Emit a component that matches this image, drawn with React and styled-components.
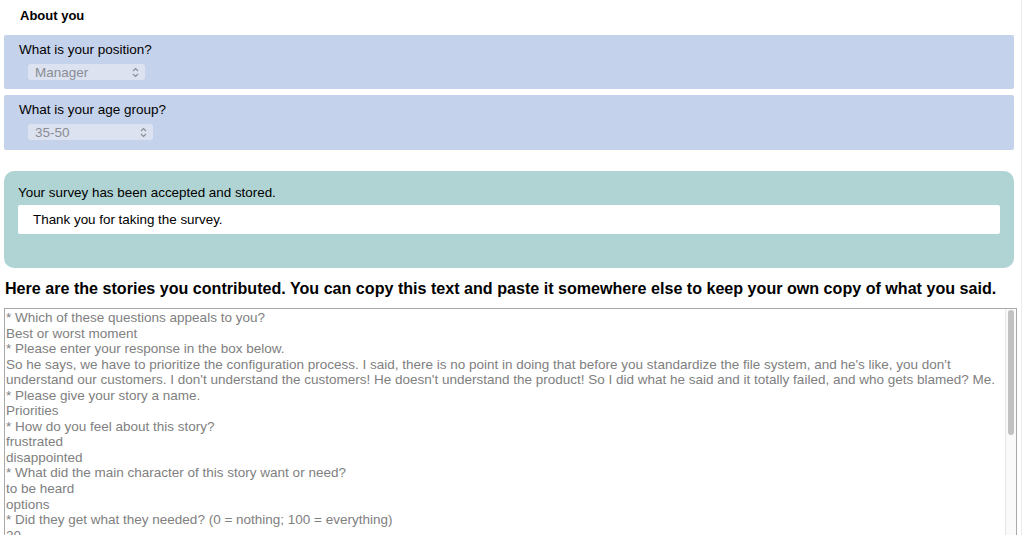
import styled, { createGlobalStyle } from "styled-components";

const GlobalStyle = createGlobalStyle`
  html, body {
    margin: 0;
    padding: 0;
    background: #fff;
    font-family: "Liberation Sans", Arial, sans-serif;
    overflow: hidden;
  }
`;

const Page = styled.div`
  width: 1021px;
  height: 535px;
  border-right: 1px solid #ececec;
  overflow: hidden;
`;

const SectionTitle = styled.div`
  font-size: 13px;
  font-weight: bold;
  color: #000;
  padding: 8px 0 0 20px;
  height: 35px;
  box-sizing: border-box;
  line-height: 15px;
`;

const QuestionBox = styled.div`
  margin: 0 0 6px 4px;
  width: 1010px;
  height: ${(p) => p.h}px;
  box-sizing: border-box;
  background: #c5d2eb;
  border-radius: 2px;
  padding: 7px 15px 0;
`;

const QuestionLabel = styled.div`
  font-size: 13.5px;
  line-height: 15px;
  color: #000;
`;

const FakeSelect = styled.div`
  margin: 7px 0 0 9px;
  width: ${(p) => p.w}px;
  height: 16px;
  box-sizing: border-box;
  background: #dce2f0;
  border-radius: 3px;
  display: flex;
  align-items: center;
  justify-content: space-between;
  padding: 0 6px 0 7px;
  font-size: 13.5px;
  color: #8a8d94;
`;

const Arrows = () => (
  <svg width="7" height="11" viewBox="0 0 7 11" fill="none" stroke="#8a8d94" strokeWidth="1.1">
    <path d="M1 4 L3.5 1.5 L6 4" />
    <path d="M1 7 L3.5 9.5 L6 7" />
  </svg>
);

const Notice = styled.div`
  margin: 21px 0 0 4px;
  width: 1010px;
  height: 97px;
  box-sizing: border-box;
  background: #b0d4d4;
  border-radius: 10px;
  padding: 14px 14px 0;
`;

const NoticeText = styled.div`
  font-size: 13.4px;
  line-height: 15px;
  color: #000;
`;

const ThanksBox = styled.div`
  margin-top: 5px;
  height: 29px;
  background: #fff;
  border-radius: 2px;
  padding-left: 15px;
  display: flex;
  align-items: center;
  font-size: 13.4px;
  color: #000;
`;

const Heading = styled.div`
  font-size: 16.1px;
  font-weight: bold;
  color: #000;
  padding: 11px 0 0 5px;
  height: 40px;
  box-sizing: border-box;
  line-height: 18px;
`;

const StoryWrap = styled.div`
  position: relative;
  margin-left: 4px;
  width: 1013px;
  height: 260px;
`;

const StoryArea = styled.textarea`
  display: block;
  width: 100%;
  height: 100%;
  box-sizing: border-box;
  border: 1px solid #a9a9a9;
  padding: 1px 11px 1px 1px;
  resize: none;
  font-family: "Liberation Sans", Arial, sans-serif;
  font-size: 13.5px;
  line-height: 15.55px;
  color: #808080;
  background: #fff;
  overflow: hidden;
  outline: none;
`;

const ScrollTrack = styled.div`
  position: absolute;
  top: 1px;
  right: 1px;
  bottom: 1px;
  width: 11px;
  box-sizing: border-box;
  background: #fafafa;
  border-left: 1px solid #e6e6e6;
  padding: 1px 2px 0 2px;
`;

const ScrollThumb = styled.div`
  height: 125px;
  background: #c2c2c2;
  border-radius: 4px;
`;

const storyText = [
  "* Which of these questions appeals to you?",
  "Best or worst moment",
  "* Please enter your response in the box below.",
  "So he says, we have to prioritize the configuration process. I said, there is no point in doing that before you standardize the file system, and he's like, you don't understand our customers. I don't understand the customers! He doesn't understand the product! So I did what he said and it totally failed, and who gets blamed? Me.",
  "* Please give your story a name.",
  "Priorities",
  "* How do you feel about this story?",
  "frustrated",
  "disappointed",
  "* What did the main character of this story want or need?",
  "to be heard",
  "options",
  "* Did they get what they needed? (0 = nothing; 100 = everything)",
  "20",
  "* How long ago did this happen?",
  "a few months ago",
  "* How important is this story to you?",
  "very important",
].join("\n");

export default function App() {
  return (
    <>
      <GlobalStyle />
      <Page>
        <SectionTitle>About you</SectionTitle>
        <QuestionBox h={54}>
          <QuestionLabel>What is your position?</QuestionLabel>
          <FakeSelect w={117}>
            Manager
            <Arrows />
          </FakeSelect>
        </QuestionBox>
        <QuestionBox h={55}>
          <QuestionLabel>What is your age group?</QuestionLabel>
          <FakeSelect w={125}>
            35-50
            <Arrows />
          </FakeSelect>
        </QuestionBox>
        <Notice>
          <NoticeText>Your survey has been accepted and stored.</NoticeText>
          <ThanksBox>Thank you for taking the survey.</ThanksBox>
        </Notice>
        <Heading>
          Here are the stories you contributed. You can copy this text and paste it somewhere else to keep your own copy of what you said.
        </Heading>
        <StoryWrap>
          <StoryArea readOnly defaultValue={storyText} />
          <ScrollTrack>
            <ScrollThumb />
          </ScrollTrack>
        </StoryWrap>
      </Page>
    </>
  );
}
